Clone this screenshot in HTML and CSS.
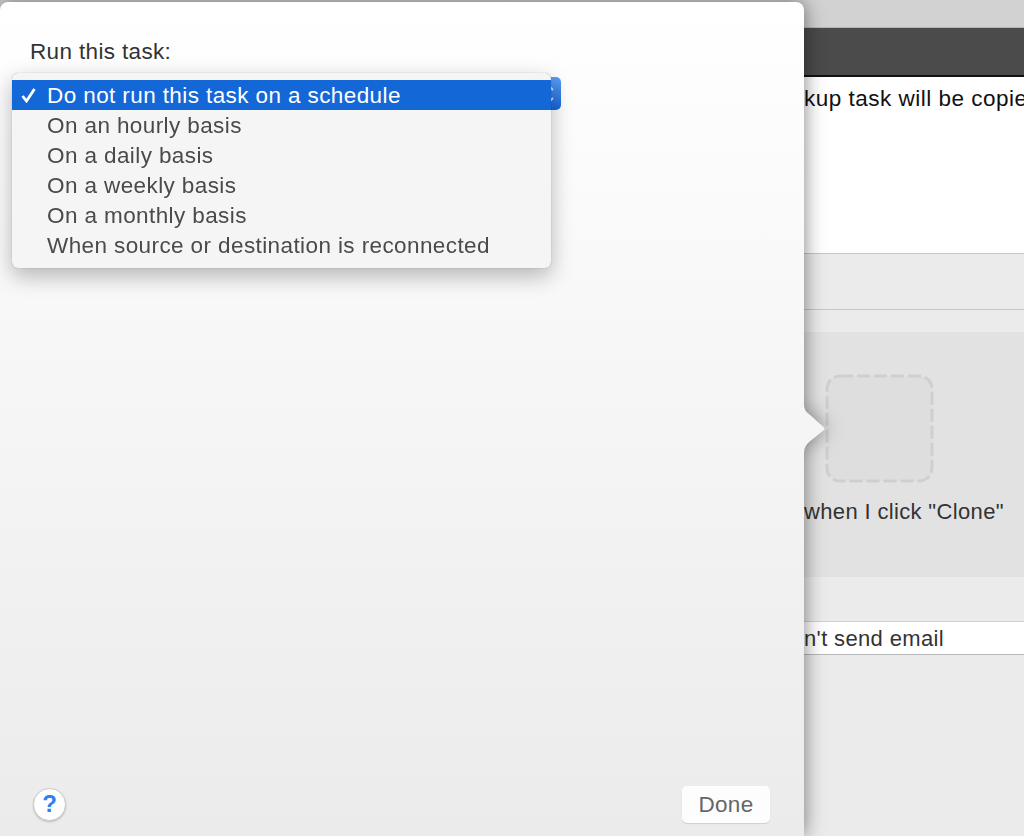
FILE: index.html
```html
<!DOCTYPE html>
<html>
  <head>
    <meta charset="utf-8">
    <title>Run this task</title>
    <link rel="stylesheet" href="styles.css">
  </head>
  <body>
    <div class="window">
      <div class="titlebar"></div>
      <div class="toolbar"></div>
      <div class="summary">kup task will be copie</div>
      <div class="band"></div>
      <div class="band band-short"></div>
      <div class="well-area">
        <svg class="well" width="109" height="109" viewBox="0 0 109 109">
          <rect x="2" y="2" width="105" height="105" rx="13" fill="#dedede" stroke="#cfcfcf" stroke-width="3" stroke-dasharray="13 4"></rect>
        </svg>
        <div class="well-label">when I click "Clone"</div>
      </div>
      <div class="band band-email"></div>
      <div class="email">n't send email</div>
    </div>

    <div class="sheet-wrap">
      <div class="sheet">
        <div class="field-label">Run this task:</div>
        <div class="popup">
          <svg class="chevrons" width="8" height="22" viewBox="0 0 8 22">
            <path d="M2 4 L5 7 M5 15 L2 18" stroke="#cfe0f8" stroke-width="1.8" fill="none"></path>
          </svg>
        </div>
        <div class="footer">
          <div class="help">?</div>
          <div class="done">Done</div>
        </div>
      </div>
      <svg class="notch" width="22" height="50" viewBox="0 0 22 50">
        <path d="M0 0 C0 5 2 8 5 10 L20 23.5 Q21.5 25 20 26 L5 38 C2 41 0 44 0 50 Z" fill="#f5f5f5"></path>
      </svg>
    </div>

    <div class="menu">
      <div class="menu-item selected">
        <svg class="check" width="15" height="15" viewBox="0 0 15 15">
          <path d="M1.5 8 L5.5 13 L13.5 1" stroke="#fff" stroke-width="2.8" fill="none"></path>
        </svg>
        Do not run this task on a schedule
      </div>
      <div class="menu-item">On an hourly basis</div>
      <div class="menu-item">On a daily basis</div>
      <div class="menu-item">On a weekly basis</div>
      <div class="menu-item">On a monthly basis</div>
      <div class="menu-item">When source or destination is reconnected</div>
    </div>
  </body>
</html>
```

FILE: styles.css
```css
html, body {
  height: 100%;
}

body {
  margin: 0;
  position: relative;
  width: 1024px;
  height: 836px;
  overflow: hidden;
  font-family: "Liberation Sans", Arial, sans-serif;
  font-size: 22px;
  letter-spacing: 0.35px;
}

/* window behind the sheet */
.window {
  height: 836px;
  display: flex;
  flex-direction: column;
  background: #ebebeb;
}

.titlebar {
  height: 28px;
  background: #d2d2d2;
  border-bottom: 1px solid #b4b4b4;
  box-sizing: border-box;
}

.toolbar {
  height: 49px;
  background: #4b4b4b;
  border-bottom: 2px solid #111;
  box-sizing: border-box;
}

.summary {
  height: 176px;
  background: #fff;
  color: #111;
  padding: 9px 0 0 804px;
  box-sizing: border-box;
  font-size: 22.5px;
  letter-spacing: 0.5px;
  line-height: 26px;
  white-space: nowrap;
}

.band {
  height: 56px;
  border-top: 1px solid #c6c6c6;
  box-sizing: border-box;
}

.band-short {
  height: 23px;
}

.well-area {
  height: 245px;
  background: #e2e2e2;
  box-sizing: border-box;
  padding: 42px 0 0 825px;
}

.well {
  display: block;
}

.well-label {
  margin: 16px 0 0 -21px;
  color: #333;
  line-height: 26px;
  white-space: nowrap;
}

.band-email {
  height: 44px;
  border-top: 0;
}

.email {
  height: 34px;
  background: #fff;
  color: #333;
  border-top: 1px solid #d0d0d0;
  border-bottom: 1px solid #b8b8b8;
  box-sizing: border-box;
  padding-left: 804px;
  line-height: 33px;
  white-space: nowrap;
}

/* sheet */
.sheet-wrap {
  position: absolute;
  top: 2px;
  left: 0;
  width: 804px;
  height: 834px;
  filter: drop-shadow(0 0 10px rgba(0, 0, 0, 0.5));
}

.sheet {
  height: 100%;
  box-sizing: border-box;
  display: flex;
  flex-direction: column;
  padding: 37px 34px 13px 30px;
  border-radius: 8px 8px 0 0;
  background: linear-gradient(#fff 0, #f8f8f8 300px, #ebebeb 100%);
  color: #333;
  font-size: 22.5px;
}

.notch {
  position: absolute;
  left: 804px;
  top: 402px;
}

.field-label {
  line-height: 26px;
}

.popup {
  margin: 12px 0 0 -18px;
  width: 549px;
  height: 33px;
  border-radius: 5px;
  background: linear-gradient(#5b9df3, #1565d8);
  display: flex;
  justify-content: flex-end;
  align-items: center;
  padding-right: 5px;
  box-sizing: border-box;
}

.footer {
  margin-top: auto;
  display: flex;
  justify-content: space-between;
  align-items: center;
  padding-left: 3px;
}

.help {
  width: 33px;
  height: 33px;
  box-sizing: border-box;
  border-radius: 50%;
  background: #fff;
  border: 1px solid #ccc;
  box-shadow: 0 1px 2px rgba(0, 0, 0, 0.2);
  color: #2d7ff9;
  font-size: 24px;
  font-weight: bold;
  text-align: center;
  line-height: 29px;
  letter-spacing: 0;
}

.done {
  width: 88px;
  height: 37px;
  border-radius: 5px;
  background: #fdfdfd;
  box-shadow: 0 1px 1px rgba(0, 0, 0, 0.12);
  color: #666;
  text-align: center;
  line-height: 38px;
}

/* open popup menu */
.menu {
  position: absolute;
  top: 73px;
  left: 12px;
  width: 539px;
  height: 195px;
  box-sizing: border-box;
  padding-top: 7px;
  border-radius: 6px;
  background: #f5f5f5;
  color: #4a4a4a;
  font-size: 22.5px;
  letter-spacing: 0.4px;
  box-shadow: 0 8px 22px rgba(0, 0, 0, 0.28), 0 0 1px rgba(0, 0, 0, 0.4);
}

.menu-item {
  position: relative;
  height: 30px;
  padding-left: 35px;
  line-height: 31px;
  white-space: nowrap;
}

.selected {
  background: #1467d6;
  color: #fff;
}

.check {
  position: absolute;
  left: 9px;
  top: 8px;
}
```
